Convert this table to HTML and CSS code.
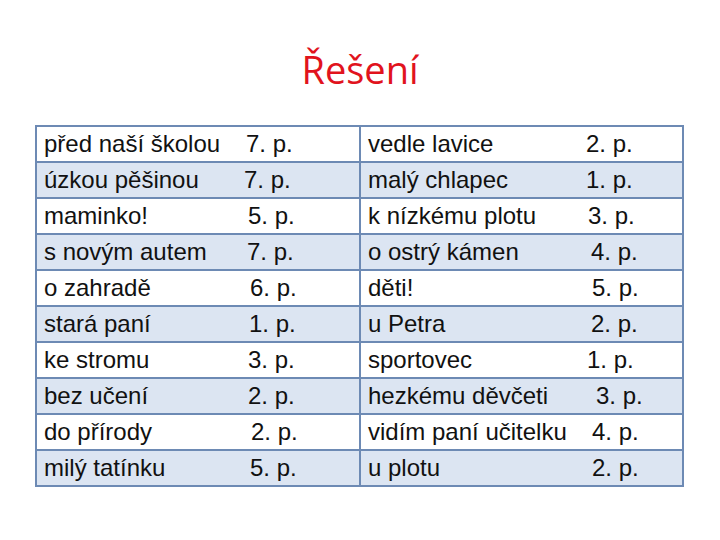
FILE: index.html
```html
<!DOCTYPE html>
<html lang="cs">
<head>
<meta charset="utf-8">
<title>Řešení</title>
<link rel="stylesheet" href="styles.css">
</head>
<body>
<h1 class="title">Řešení</h1>
<div class="table">
  <div class="row">
    <div class="cell left"><span class="term" style="--w:202px">před naší školou</span><span class="num">7. p.</span></div>
    <div class="cell right"><span class="term" style="--w:218px">vedle lavice</span><span class="num">2. p.</span></div>
  </div>
  <div class="row alt">
    <div class="cell left"><span class="term" style="--w:200px">úzkou pěšinou</span><span class="num">7. p.</span></div>
    <div class="cell right"><span class="term" style="--w:218px">malý chlapec</span><span class="num">1. p.</span></div>
  </div>
  <div class="row">
    <div class="cell left"><span class="term" style="--w:204px">maminko!</span><span class="num">5. p.</span></div>
    <div class="cell right"><span class="term" style="--w:220px">k nízkému plotu</span><span class="num">3. p.</span></div>
  </div>
  <div class="row alt">
    <div class="cell left"><span class="term" style="--w:203px">s novým autem</span><span class="num">7. p.</span></div>
    <div class="cell right"><span class="term" style="--w:223px">o ostrý kámen</span><span class="num">4. p.</span></div>
  </div>
  <div class="row">
    <div class="cell left"><span class="term" style="--w:206px">o zahradě</span><span class="num">6. p.</span></div>
    <div class="cell right"><span class="term" style="--w:224px">děti!</span><span class="num">5. p.</span></div>
  </div>
  <div class="row alt">
    <div class="cell left"><span class="term" style="--w:205px">stará paní</span><span class="num">1. p.</span></div>
    <div class="cell right"><span class="term" style="--w:223px">u Petra</span><span class="num">2. p.</span></div>
  </div>
  <div class="row">
    <div class="cell left"><span class="term" style="--w:204px">ke stromu</span><span class="num">3. p.</span></div>
    <div class="cell right"><span class="term" style="--w:219px">sportovec</span><span class="num">1. p.</span></div>
  </div>
  <div class="row alt">
    <div class="cell left"><span class="term" style="--w:204px">bez učení</span><span class="num">2. p.</span></div>
    <div class="cell right"><span class="term" style="--w:228px">hezkému děvčeti</span><span class="num">3. p.</span></div>
  </div>
  <div class="row">
    <div class="cell left"><span class="term" style="--w:207px">do přírody</span><span class="num">2. p.</span></div>
    <div class="cell right"><span class="term" style="--w:224px">vidím paní učitelku</span><span class="num">4. p.</span></div>
  </div>
  <div class="row alt">
    <div class="cell left"><span class="term" style="--w:206px">milý tatínku</span><span class="num">5. p.</span></div>
    <div class="cell right"><span class="term" style="--w:224px">u plotu</span><span class="num">2. p.</span></div>
  </div>
</div>
</body>
</html>
```

FILE: styles.css
```css
html, body {
  margin: 0;
  padding: 0;
  background: #ffffff;
}

body {
  width: 720px;
  height: 540px;
  overflow: hidden;
}

.title {
  margin: 0;
  padding-top: 47px;
  height: 44px;
  line-height: 44px;
  text-align: center;
  font-family: "Open Sans", "DejaVu Sans", sans-serif;
  font-weight: 400;
  font-size: 38px;
  color: #e1131d;
}

.table {
  box-sizing: border-box;
  margin: 34px 0 0 35px;
  width: 649px;
  border: 2px solid #6d8ab4;
  font-family: "Liberation Sans", Arial, sans-serif;
  font-size: 24px;
  color: #111111;
}

.row {
  display: grid;
  grid-template-columns: 324px 1fr;
  height: 36px;
  box-sizing: border-box;
  border-bottom: 2px solid #6d8ab4;
  background: #ffffff;
}

.row:last-child {
  height: 34px;
  border-bottom: none;
}

.row.alt {
  background: #dce5f2;
}

.cell {
  display: flex;
  align-items: center;
  padding-left: 7px;
  line-height: 34px;
  white-space: nowrap;
}

.cell.left {
  border-right: 2px solid #6d8ab4;
}

.term {
  display: inline-block;
  width: var(--w);
  flex: none;
}

.num {
  flex: none;
}
```
